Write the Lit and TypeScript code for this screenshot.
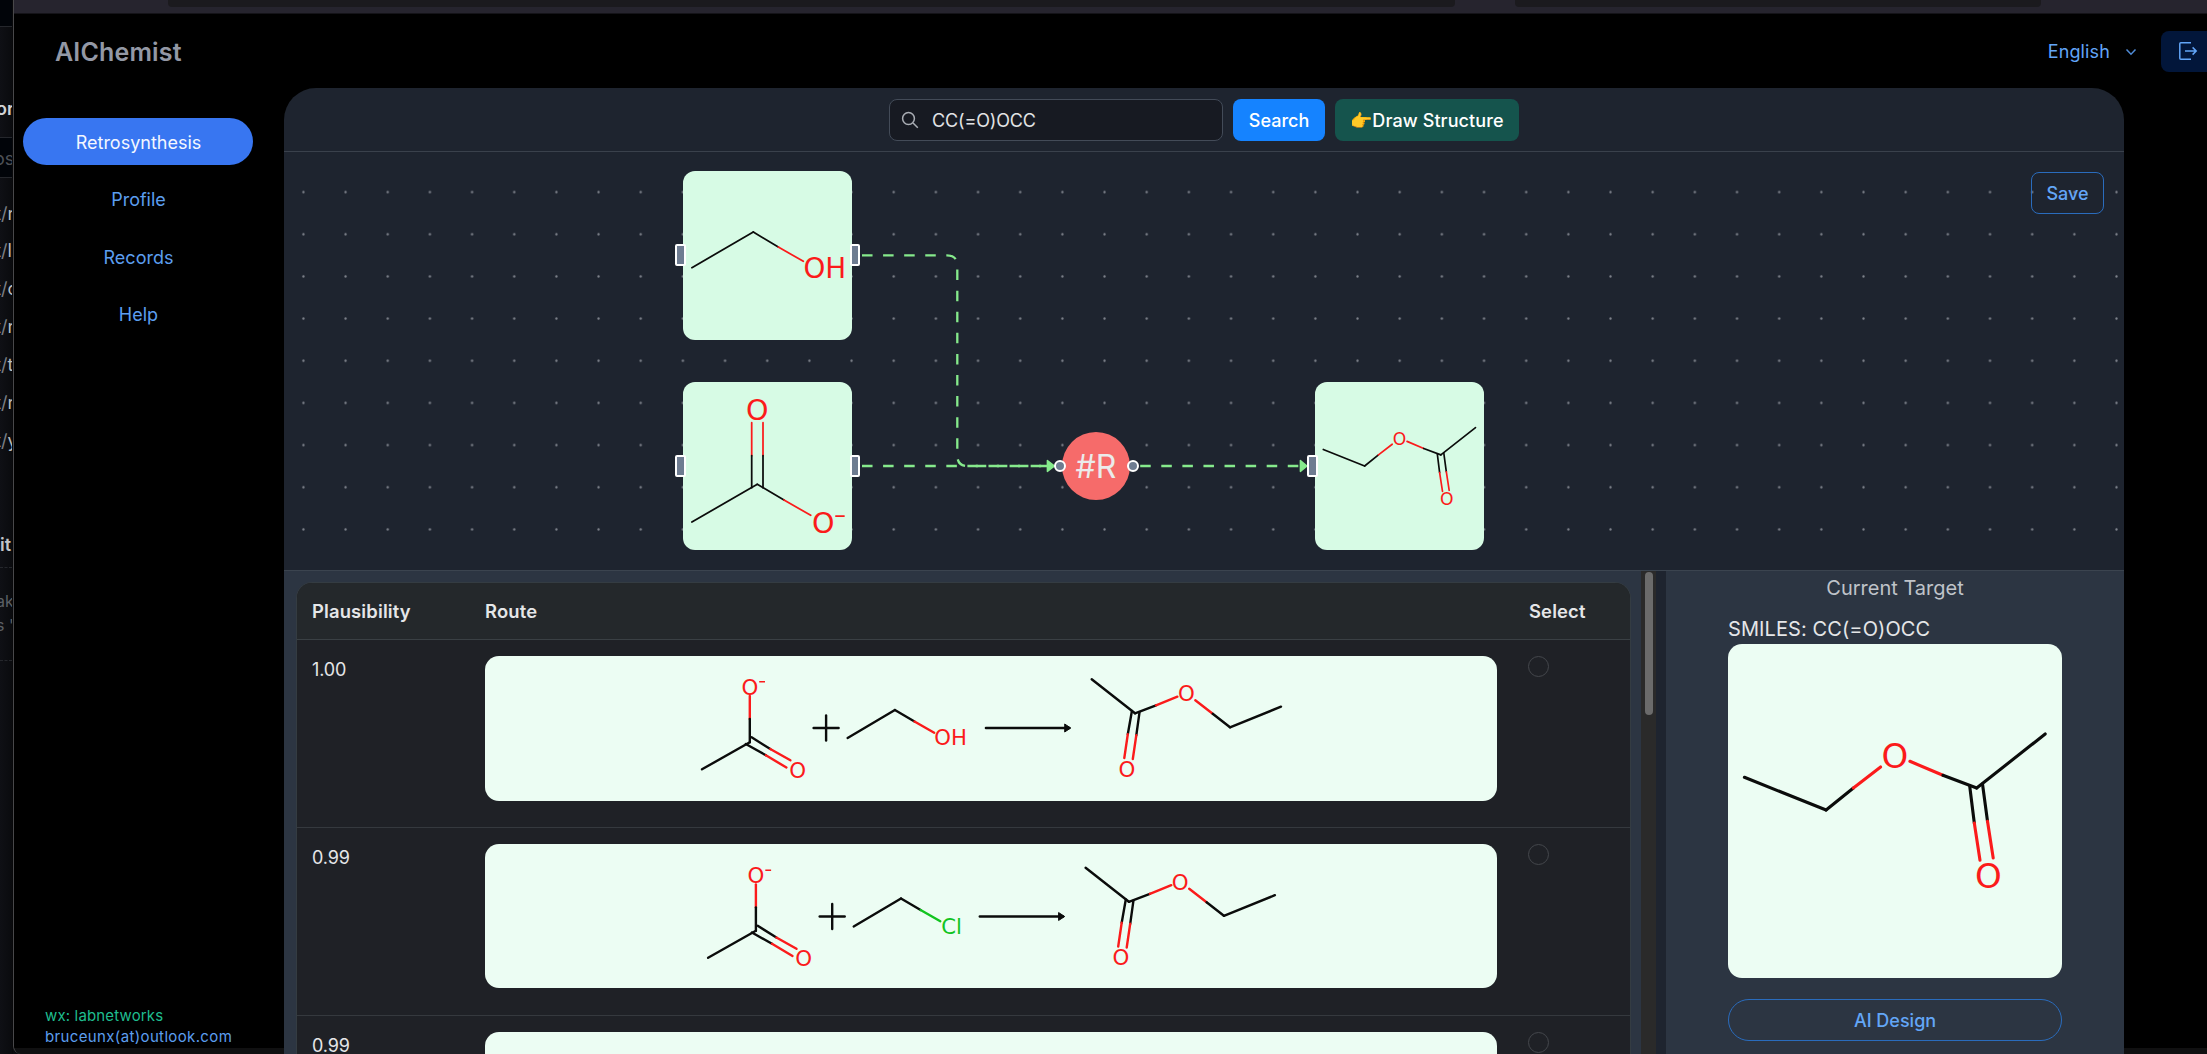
import { LitElement, html, svg, css } from "lit";

const K = "#0b0c0b";
const RED = "#fb1b1b";
const GREEN = "#12c41f";

type Bond = [string, number, number, number, number];
type Label = [string, string, number, number, number];
interface Drawing {
  bonds: Bond[];
  labels: Label[];
}

/* Label = colour, text, centre x, centre y, font size */
const ethanol: Drawing = {
  bonds: [
    [K, 8.9, 96.7, 70.3, 61],
    [K, 70.3, 61, 95.3, 76],
    [RED, 95.3, 76, 120.3, 90.3],
  ],
  labels: [[RED, "OH", 141.8, 97.3, 27.8]],
};

const acetate: Drawing = {
  bonds: [
    [RED, 68.7, 40.7, 68.7, 73.7],
    [K, 68.7, 73.7, 68.7, 105.7],
    [RED, 80, 40.7, 80, 73.7],
    [K, 80, 73.7, 80, 105.7],
    [K, 8.9, 140, 74.3, 102.3],
    [K, 74.3, 102.3, 101, 118],
    [RED, 101, 118, 127.7, 133.3],
    [RED, 152.9, 134, 161, 134],
  ],
  labels: [
    [RED, "O", 74.3, 27.3, 28.6],
    [RED, "O", 140.2, 140.5, 28.6],
  ],
};

const ester: Drawing = {
  bonds: [
    [K, 16.4, 133.3, 98.1, 166],
    [K, 98.1, 166, 125.4, 144],
    [RED, 125.4, 144, 152.6, 123],
    [RED, 181.9, 117.3, 214.9, 131.3],
    [K, 214.9, 131.3, 248.7, 144],
    [K, 248.7, 144, 317.2, 90],
    [K, 241.7, 142, 246.3, 179],
    [RED, 246.3, 179, 252, 216.3],
    [K, 254.5, 140, 259.5, 177.3],
    [RED, 259.5, 177.3, 265.2, 214],
  ],
  labels: [
    [RED, "O", 167, 112, 34],
    [RED, "O", 260.3, 231.3, 34],
  ],
};

const reactant: Drawing = {
  bonds: [
    [RED, 264.8, 40, 264.8, 63],
    [K, 264.8, 63, 264.8, 86.3],
    [K, 217, 113.3, 264.8, 86.3],
    [K, 266.6, 81.3, 285.3, 93],
    [RED, 285.3, 93, 305.4, 104.3],
    [K, 260.8, 88, 280.9, 99.3],
    [RED, 280.9, 99.3, 301.4, 111.5],
    [K, 328.6, 72, 353.6, 72],
    [K, 341.1, 59.5, 341.1, 84.5],
    [K, 362.6, 82, 409.9, 54],
    [K, 409.9, 54, 429.5, 65.5],
  ],
  labels: [
    [RED, "O", 264.8, 30.7, 21.4],
    [RED, "O", 312.6, 113.7, 21.4],
  ],
};

const product: Drawing = {
  bonds: [
    [K, 500.9, 72, 584, 72],
    [K, 606.7, 23.3, 650, 57.3],
    [K, 650, 57.3, 671, 49.3],
    [RED, 671, 49.3, 692.4, 40.7],
    [RED, 710.3, 44.3, 727.7, 57.7],
    [K, 727.7, 57.7, 745, 71.3],
    [K, 745, 71.3, 796, 50.7],
    [K, 646.9, 55, 642.8, 78.3],
    [RED, 642.8, 78.3, 639.3, 102],
    [K, 654.5, 56.3, 651.3, 79.3],
    [RED, 651.3, 79.3, 647.8, 103],
  ],
  labels: [
    [RED, "O", 701.3, 37.3, 21.4],
    [RED, "O", 642, 112.7, 21.4],
  ],
};

const leaving: Record<string, Drawing> = {
  OH: {
    bonds: [[RED, 429.5, 65.5, 449.2, 76.7]],
    labels: [[RED, "OH", 465.6, 81.7, 21.2]],
  },
  Cl: {
    bonds: [[GREEN, 429.5, 65.5, 449.2, 76.7]],
    labels: [[GREEN, "Cl", 460.4, 82, 21.2]],
  },
};

const draw = (d: Drawing) => svg`
  ${d.bonds.map(([c, a, b, x, y]) => svg`<path d=${`M${a} ${b}L${x} ${y}`} stroke=${c}></path>`)}
  ${d.labels.map(
    ([c, t, x, y, s]) =>
      svg`<text x=${x} y=${y + s * 0.365} font-size=${s} fill=${c} text-anchor="middle">${t}</text>`
  )}`;

const reaction = (group: string, dx: number) => html`
  <svg class="mol bold" width="1012" height="145" viewBox="0 0 1012 145">
    <g transform=${`translate(${dx} ${dx ? 0.5 : 0})`}>
      ${draw(reactant)}${draw(leaving[group])}
      <path d="M274.2 25.8H280" stroke=${RED} stroke-width="1.4" stroke-linecap="butt"></path>
    </g>
    <g transform=${`translate(${-dx} ${dx ? 0.5 : 0})`}>
      ${draw(product)}
      <path d="M580 68.2L585.8 72L580 75.8Z" fill=${K} stroke=${K} stroke-width="1"></path>
    </g>
  </svg>`;

class RoutePlot extends LitElement {
  static styles = css`
    :host { display: block; position: relative; height: 418px; overflow: hidden; }
    .layer { display: block; }
    .node { position: absolute; width: 169px; height: 169px; border-radius: 12px; background: #d7fbe5; }
    .a { left: 399px; top: 19px; }
    .b { left: 399px; top: 230px; height: 168px; }
    .c { left: 1031px; top: 230px; height: 168px; }
    .mol { display: block; fill: none; stroke-width: 1.75; stroke-linecap: round; font-family: "DejaVu Sans", sans-serif; }
    .mol text { stroke: none; }
    .half { stroke-width: 3.3; }
    .port { position: absolute; top: 73px; box-sizing: border-box; width: 10.5px; height: 22px; border: 2px solid #fff; border-radius: 2px; background: #6e7c91; }
    .b .port, .c .port { top: 72.5px; }
    .in { left: -8px; }
    .out { right: -8px; }
    .step { position: absolute; left: 778px; top: 279.7px; width: 68px; height: 68px; border-radius: 50%; background: #f66b6a; color: #ebebeb; font-size: 32px; line-height: 70px; text-align: center; }
    .dot { position: absolute; top: 28.3px; box-sizing: border-box; width: 12px; height: 12px; border: 2px solid #fff; border-radius: 50%; background: #6e7c91; }
    .dl { left: -8.3px; }
    .dr { right: -8.6px; }
    .save { position: absolute; right: 20px; top: 20px; box-sizing: border-box; width: 73px; height: 42px; border: 1.5px solid #2a6cbd; border-radius: 8px; background: none; color: #63a6f7; font: 500 18px Inter, sans-serif; padding: 0; }
  `;
  render() {
    return html`
      <svg class="layer" width="1840" height="418" viewBox="0 0 1840 418">
        <defs>
          <pattern id="dots" x="-1.67" y="19" width="42.165" height="42.165" patternUnits="userSpaceOnUse">
            <circle cx="21.08" cy="21.08" r="1.15" fill="#80848d"></circle>
          </pattern>
        </defs>
        <rect width="1840" height="418" fill="url(#dots)"></rect>
        <g fill="none" stroke="#86ea8c" stroke-width="2.3" stroke-dasharray="10.54 10.54">
          <path d="M578 103.4H662.8Q673.3 103.4 673.3 113.9V303.5Q673.3 314 683.8 314H768"></path>
          <path d="M578 314H768"></path>
          <path d="M856.2 314H1020"></path>
        </g>
        <g fill="#86ea8c" stroke="#86ea8c" stroke-width="1.5" stroke-linejoin="round">
          <path d="M763.4 308.6L770.5 314L763.4 319.4Z"></path>
          <path d="M1016.4 308.6L1023 314L1016.4 319.4Z"></path>
        </g>
      </svg>
      <div class="node a">
        <svg class="mol" width="169" height="169" viewBox="0 0 169 169">${draw(ethanol)}</svg>
        <span class="port in"></span><span class="port out"></span>
      </div>
      <div class="node b">
        <svg class="mol" width="169" height="168" viewBox="0 0 169 168">${draw(acetate)}</svg>
        <span class="port in"></span><span class="port out"></span>
      </div>
      <div class="node c">
        <svg class="mol half" width="169" height="168" viewBox="0 0 334 332">${draw(ester)}</svg>
        <span class="port in"></span>
      </div>
      <div class="step">#R<span class="dot dl"></span><span class="dot dr"></span></div>
      <button class="save">Save</button>
    `;
  }
}
customElements.define("route-plot", RoutePlot);

const rows = [
  { score: "1.00", group: "OH", dx: 0 },
  { score: "0.99", group: "Cl", dx: 6.1 },
  { score: "0.99", group: "OH", dx: 0 },
];

class AppRoot extends LitElement {
  static styles = css`
    :host { display: block; width: 2207px; height: 1054px; overflow: hidden; background: #0b0c0f; font-family: Inter, sans-serif; font-size: 18px; color: #e5e6e8; }
    * { box-sizing: border-box; }
    .desk { display: flex; height: 1054px; }
    .behind { flex: none; width: 13px; height: 1054px; overflow: hidden; background: linear-gradient(90deg, #0f1015, #0a0b0e); border-right: 1px solid #08080a; white-space: nowrap; color: #b9bcc0; display: flex; flex-direction: column; }
    .b-top { height: 27px; background: #010409; border-bottom: 1px solid #25272c; }
    .b-title { height: 111px; padding-top: 70px; line-height: 23px; font-weight: 600; color: #d0d2d5; border-bottom: 1px solid #25272c; text-indent: -4px; }
    .b-head { height: 40px; line-height: 41px; background: #010409; border-bottom: 1px solid #25272c; color: #4d5157; text-indent: -6px; }
    .b-list { height: 339px; padding-top: 16.5px; line-height: 37.9px; }
    .b-item { text-indent: -5px; }
    .slash { color: #7b7f86; }
    .b-sub { height: 51px; padding-top: 17px; line-height: 22px; font-weight: 600; color: #c3c5c8; border-bottom: 1px dashed #25272c; }
    .b-note { height: 93px; padding-top: 21px; font-size: 16px; line-height: 24px; color: #5c6066; border-bottom: 1px dashed #25272c; text-indent: -4px; }
    .window { flex: 1; min-width: 0; display: flex; flex-direction: column; background: #101011; border-left: 1px solid #48484a; border-bottom-left-radius: 8px; overflow: hidden; }
    .tabs { flex: none; display: flex; height: 14px; background: #26242e; border-bottom: 1px solid #141318; padding-left: 154px; gap: 60px; }
    .tab { height: 7px; background: #1b1a1e; border-radius: 0 0 4px 4px; width: 1287px; }
    .short { width: 526px; }
    .top { flex: none; height: 74px; background: #000; display: flex; align-items: center; padding-left: 41px; }
    .brand { font-size: 25px; font-weight: 600; color: #9398a5; letter-spacing: 0.16px; padding-top: 2px; }
    .lang { margin-left: auto; display: flex; align-items: center; gap: 15px; color: #62a5f8; margin-right: 24px; padding-top: 1px; }
    .lang { letter-spacing: 0.13px; }
    .exit { width: 46px; height: 41px; border-radius: 8px 0 0 8px; background: #02163a; padding: 8.5px 0 0 15px; }
    .body { flex: 1; min-height: 0; display: flex; }
    .side { flex: none; width: 270px; height: 960px; background: #000; display: flex; flex-direction: column; padding: 30px 31px 1px 9px; gap: 10.4px; }
    .nav { height: 47px; line-height: 50px; text-align: center; border-radius: 24px; color: #5c9eef; width: 230px; padding-left: 1px; }
    .on { background: #3876f1; color: #f3f7ff; }
    .contact { margin-top: auto; padding-left: 22px; font-size: 15px; line-height: 21px; color: #1fbd8f; letter-spacing: 0.15px; }
    .mail { color: #5c9eef; letter-spacing: 0.36px; }
    .rest { flex: 1; height: 960px; background: #000; }
    .main { flex: none; width: 1840px; height: 966px; background: #1e242f; border-radius: 32px 32px 0 0; overflow: hidden; display: flex; flex-direction: column; }
    .corners { background: #000; flex: none; height: 966px; }
    .bar { flex: none; height: 64px; border-bottom: 1px solid #3a414c; display: flex; justify-content: center; align-items: flex-start; gap: 10px; padding: 11px 0 0 0; }
    .query { width: 334px; height: 42px; border: 1.5px solid #434b58; border-radius: 8px; background: #171a22; display: flex; align-items: center; gap: 13.5px; padding-left: 10.5px; color: #e2e3e5; letter-spacing: -0.15px; }
    .btn { height: 42px; border: 0; border-radius: 8px; color: #fff; font: 500 18px Inter, sans-serif; padding: 1px 0 0; }
    .go { width: 92px; background: #1583ff; }
    .sketch { width: 184px; background: #15544d; display: flex; align-items: center; justify-content: center; letter-spacing: 0.1px; }
    .hand { font: 18px "Noto Color Emoji", sans-serif; width: 22px; }
    .lower { flex: 1; min-height: 0; display: flex; border-top: 1px solid #3b444f; }
    .routes { width: 1357px; background: #2c3542; padding: 11px 10px 0 12px; overflow: hidden; }
    .table { border: 1px solid #343c42; border-bottom: 0; border-radius: 16px 16px 0 0; overflow: hidden; background: #1f2126; height: 480px; }
    .row { display: grid; grid-template-columns: 173px 1044px 1fr; padding-left: 15px; height: 187.8px; border-bottom: 1px solid #35393e; padding-top: 16px; }
    .head { height: 57px; padding-top: 0; align-items: center; background: #24282b; border-color: #3a4044; font-weight: 600; font-size: 18.4px; letter-spacing: 0.15px; }
    .score { line-height: 28px; letter-spacing: -0.15px; }
    .card { width: 1012px; height: 144.5px; border-radius: 14px; background: #ecfdf3; overflow: hidden; }
    .radio { width: 21px; height: 21px; border: 1.3px solid #44474c; border-radius: 50%; margin-left: -1px; }
    .track { width: 15px; background: #2a2a2a; padding: 1px 0 0 4px; }
    .thumb { width: 8px; height: 143px; border-radius: 4px; background: #6b6b6b; }
    .gap { width: 10px; }
    .target { flex: 1; background: #2c3542; display: flex; flex-direction: column; align-items: center; font-size: 20px; }
    .cap { color: #bfc3c9; line-height: 34px; height: 32px; }
    .smiles { width: 334px; height: 41px; line-height: 52px; letter-spacing: 0.09px; white-space: nowrap; }
    .big { width: 334px; height: 334px; border-radius: 14px; background: #ecfdf3; }
    .design { margin-top: 21px; width: 334px; height: 42px; border: 1.5px solid #2a6cbd; border-radius: 21px; background: none; color: #63a6f7; font: 500 18px Inter, sans-serif; }
    .mol { display: block; fill: none; stroke-width: 3.1; font-family: "DejaVu Sans", sans-serif; stroke-linecap: round; }
    .mol text { stroke: none; }
    .bold { stroke-width: 2.4; }
  `;
  render() {
    const list = ["r", "l", "c", "r", "t", "r", "y"];
    return html`
      <div class="desk">
        <div class="behind">
          <div class="b-top"></div>
          <div class="b-title">or</div>
          <div class="b-head">os</div>
          <div class="b-list">
            ${list.map((c) => html`<div class="b-item">t<span class="slash">/</span>${c}</div>`)}
          </div>
          <div class="b-sub">it</div>
          <div class="b-note"><div>ak</div><div>s '</div></div>
        </div>
        <div class="window">
          <div class="tabs"><div class="tab"></div><div class="tab short"></div></div>
          <div class="top">
            <div class="brand">AIChemist</div>
            <div class="lang">
              English
              <svg width="12" height="8" viewBox="0 0 12 8" fill="none" stroke="#4f8bd6" stroke-width="1.5"><path d="M1.5 1.5L6 6.2L10.5 1.5"></path></svg>
            </div>
            <div class="exit">
              <svg width="24" height="24" viewBox="0 0 24 24" fill="none" stroke="#62a5f8" stroke-width="1.5">
                <path d="M15 3.8H4.8Q3.8 3.8 3.8 4.8V19.2Q3.8 20.2 4.8 20.2H15M9 12H20M16.6 8.4L20.2 12L16.6 15.6"></path>
              </svg>
            </div>
          </div>
          <div class="body">
            <div class="side">
              <div class="nav on">Retrosynthesis</div>
              <div class="nav">Profile</div>
              <div class="nav">Records</div>
              <div class="nav">Help</div>
              <div class="contact"><div>wx: labnetworks</div><div class="mail">bruceunx(at)outlook.com</div></div>
            </div>
            <div class="corners">
              <div class="main">
                <div class="bar">
                  <div class="query">
                    <svg width="18" height="18" viewBox="0 0 18 18" fill="none" stroke="#a9adb4" stroke-width="1.5"><circle cx="7.5" cy="7.5" r="5.9"></circle><path d="M12 12L16.8 16.8"></path></svg>
                    CC(=O)OCC
                  </div>
                  <button class="btn go">Search</button>
                  <button class="btn sketch"><span class="hand">👉</span>Draw Structure</button>
                </div>
                <route-plot></route-plot>
                <div class="lower">
                  <div class="routes">
                    <div class="table">
                      <div class="row head"><span>Plausibility</span><span>Route</span><span>Select</span></div>
                      ${rows.map(
                        (r) => html`<div class="row">
                          <span class="score">${r.score}</span>
                          <div class="card">${reaction(r.group, r.dx)}</div>
                          <span class="radio"></span>
                        </div>`
                      )}
                    </div>
                  </div>
                  <div class="track"><div class="thumb"></div></div>
                  <div class="gap"></div>
                  <div class="target">
                    <div class="cap">Current Target</div>
                    <div class="smiles">SMILES: CC(=O)OCC</div>
                    <div class="big"><svg class="mol" width="334" height="334" viewBox="0 0 334 334">${draw(ester)}</svg></div>
                    <button class="design">AI Design</button>
                  </div>
                </div>
              </div>
            </div>
            <div class="rest"></div>
          </div>
        </div>
      </div>
    `;
  }
}
customElements.define("app-root", AppRoot);
